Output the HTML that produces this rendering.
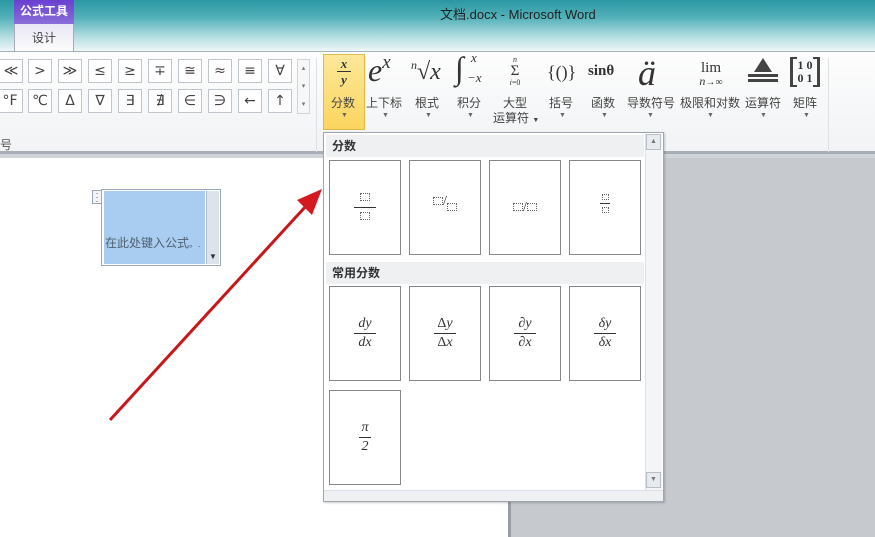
<!DOCTYPE html>
<html><head><meta charset="utf-8">
<style>
*{margin:0;padding:0;box-sizing:border-box}
body{width:875px;height:537px;overflow:hidden;position:relative;background:#fff;font-family:"Liberation Sans","Noto Sans CJK SC",sans-serif;color:#333}
.abs{position:absolute}
.title{left:0;top:0;width:875px;height:52px;background:linear-gradient(#2a97a3 0%,#55b2ba 35%,#b2dde0 70%,#f2f8f9 100%)}
.ribbon{left:0;top:51px;width:875px;height:103px;background:linear-gradient(#fdfdfd,#f1f3f5);border-top:1px solid #a9b3bd;border-bottom:3px solid #a8aeb6}
.sym{width:24px;height:24px;border:1px solid #bfc5cb;background:#fff;font-size:14px;text-align:center;line-height:22px;color:#444;font-family:"DejaVu Sans",sans-serif}
.lbl{font-size:12px;color:#444;position:absolute;white-space:nowrap}
.dd{font-size:7px;color:#666;position:absolute}
.cell{width:72px;height:95px;border:1px solid #888;background:#fff;position:absolute;font-family:"Liberation Serif",serif;font-style:italic;font-size:14px;text-align:center;color:#333}
.frac{position:absolute;left:0;width:100%;top:28px;line-height:18px}
.frac hr{width:22px;margin:0 auto;border:0;border-top:1px solid #333}
.box{display:inline-block;width:10px;height:8px;border:1px dotted #666}
</style></head><body>
<div class="abs title"></div>
<div class="abs" style="left:14px;top:0;width:60px;height:24px;background:linear-gradient(#6a3fd0,#8a6ed8);color:#fff;font-size:12px;font-weight:bold;text-align:center;line-height:22px">公式工具</div>
<div class="abs" style="left:14px;top:24px;width:60px;height:28px;background:linear-gradient(#e8e6f4,#fdfdfd);border-left:1px solid #aab;border-right:1px solid #aab;font-size:12px;text-align:center;line-height:28px;color:#444">设计</div>
<div class="abs" style="left:440px;top:4px;font-size:13px;color:#222">文档.docx - Microsoft Word</div>
<div class="abs ribbon"></div>
<div class="abs" style="left:0;top:154px;width:875px;height:4px;background:#d0d3d8"></div>
<div class="abs" style="left:0;top:59px">
<div class="abs sym" style="left:-1px">≪</div><div class="abs sym" style="left:28px">&gt;</div><div class="abs sym" style="left:58px">≫</div><div class="abs sym" style="left:88px">≤</div><div class="abs sym" style="left:118px">≥</div><div class="abs sym" style="left:148px">∓</div><div class="abs sym" style="left:178px">≅</div><div class="abs sym" style="left:208px">≈</div><div class="abs sym" style="left:238px">≡</div><div class="abs sym" style="left:268px">∀</div>
</div>
<div class="abs" style="left:0;top:89px">
<div class="abs sym" style="left:-3px;width:26px">°F</div><div class="abs sym" style="left:28px">℃</div><div class="abs sym" style="left:58px">Δ</div><div class="abs sym" style="left:88px">∇</div><div class="abs sym" style="left:118px">∃</div><div class="abs sym" style="left:148px">∄</div><div class="abs sym" style="left:178px">∈</div><div class="abs sym" style="left:208px">∋</div><div class="abs sym" style="left:238px">←</div><div class="abs sym" style="left:268px">↑</div>
</div>
<div class="abs" style="left:297px;top:59px;width:13px;height:55px;border:1px solid #d0d5da;background:#f6f7f8;font-size:7px;color:#777;text-align:center;line-height:18px">▴<br>▾<br>▾</div>
<div class="abs" style="left:0;top:136px;font-size:12px;color:#555">号</div>
<div class="abs" style="left:316px;top:58px;width:1px;height:94px;background:#dde1e5"></div>
<div class="abs" style="left:828px;top:58px;width:1px;height:94px;background:#dde1e5"></div>
<div class="abs" style="left:323px;top:54px;width:42px;height:76px;background:linear-gradient(#fde89a,#fbd55e);border:1px solid #e2b84a"></div>
<div class="abs" style="left:323px;top:54px;width:42px;text-align:center;font-family:'Liberation Serif',serif;font-style:italic;font-weight:bold;font-size:13px;line-height:13px;padding-top:3px">x<div style="width:14px;margin:1px auto;border-top:1px solid #333"></div>y</div>
<div class="lbl" style="left:331px;top:94px">分数</div><div class="dd" style="left:341px;top:112px">▼</div>
<div class="abs" style="left:368px;top:52px;font-family:'Liberation Serif',serif;font-style:italic;font-size:32px;color:#333">e<span style="font-size:19px;vertical-align:13px">x</span></div>
<div class="lbl" style="left:366px;top:94px">上下标</div><div class="dd" style="left:382px;top:112px">▼</div>
<div class="abs" style="left:411px;top:58px;font-family:'Liberation Serif',serif;font-style:italic;font-size:24px;color:#333"><span style="font-size:12px;vertical-align:10px">n</span>√x</div>
<div class="lbl" style="left:415px;top:94px">根式</div><div class="dd" style="left:425px;top:112px">▼</div>
<div class="abs" style="left:455px;top:50px;width:30px;height:40px;font-family:'Liberation Serif',serif;font-size:32px;color:#333;line-height:36px">∫<span style="font-size:13px;font-style:italic;position:absolute;left:16px;top:-10px">x</span><span style="font-size:13px;font-style:italic;position:absolute;left:12px;top:10px">−x</span></div>
<div class="lbl" style="left:457px;top:94px">积分</div><div class="dd" style="left:467px;top:112px">▼</div>
<div class="abs" style="left:505px;top:55px;width:20px;text-align:center;font-family:'Liberation Serif',serif;font-size:8px;line-height:9px;color:#333"><i>n</i><br><span style="font-size:15px;line-height:14px">Σ</span><br><i>i</i>=0</div>
<div class="lbl" style="left:503px;top:94px">大型</div><div class="lbl" style="left:493px;top:109px">运算符 <span style="font-size:7px">▼</span></div>
<div class="abs" style="left:547px;top:62px;font-family:'Liberation Serif',serif;font-size:18px;color:#333">{()}</div>
<div class="lbl" style="left:549px;top:94px">括号</div><div class="dd" style="left:559px;top:112px">▼</div>
<div class="abs" style="left:588px;top:63px;font-family:'Liberation Serif',serif;font-size:15px;font-weight:bold;color:#333">sinθ</div>
<div class="lbl" style="left:591px;top:94px">函数</div><div class="dd" style="left:601px;top:112px">▼</div>
<div class="abs" style="left:638px;top:52px;font-family:'Liberation Serif',serif;font-style:italic;font-size:36px;color:#333">ä</div>
<div class="lbl" style="left:627px;top:94px">导数符号</div><div class="dd" style="left:647px;top:112px">▼</div>
<div class="abs" style="left:694px;top:62px;width:34px;text-align:center;font-family:'Liberation Serif',serif;font-size:15px;line-height:13px;color:#333">lim<br><span style="font-size:12px;font-style:italic">n</span><span style="font-size:10px">→∞</span></div>
<div class="lbl" style="left:680px;top:94px">极限和对数</div><div class="dd" style="left:707px;top:112px">▼</div>
<div class="abs" style="left:748px;top:58px;width:30px;height:26px"><div style="width:0;height:0;margin:0 auto;border-left:9px solid transparent;border-right:9px solid transparent;border-bottom:14px solid #444"></div><div style="height:3px;background:#444;margin-top:2px"></div><div style="height:3px;background:#444;margin-top:2px"></div></div>
<div class="lbl" style="left:745px;top:94px">运算符</div><div class="dd" style="left:760px;top:112px">▼</div>
<div class="abs" style="left:790px;top:57px;width:30px;height:30px;border:3px solid #444;border-top-width:2px;border-bottom-width:2px;font-family:'Liberation Serif',serif;font-weight:bold;font-size:12px;line-height:13px;text-align:center;color:#333;padding-top:0px"><div style="position:absolute;left:4px;top:-2px;width:16px;height:30px;background:#f8f9fa"></div><div style="position:relative">1 0<br>0 1</div></div>
<div class="lbl" style="left:793px;top:94px">矩阵</div><div class="dd" style="left:803px;top:112px">▼</div>
<div class="abs" style="left:510px;top:158px;width:365px;height:379px;background:#c6cacf"></div>
<div class="abs" style="left:508px;top:158px;width:3px;height:379px;background:#9a9ea4"></div>
<div class="abs" style="left:101px;top:189px;width:120px;height:77px;border:1px solid #9aa8b8;background:#fff"></div>
<div class="abs" style="left:104px;top:191px;width:101px;height:73px;background:#a8cdf0"></div>
<div class="abs" style="left:206px;top:191px;width:13px;height:73px;background:#dde3ea;border-left:1px solid #b6c0cc;font-size:8px;color:#333;text-align:center;padding-top:62px;line-height:8px">▼</div>
<div class="abs" style="left:92px;top:190px;width:10px;height:14px;border:1px solid #9aa8b8;background:#f2f4f7;font-size:9px;line-height:4px;text-align:center;color:#555">·<br>·<br>·</div>
<div class="abs" style="left:105px;top:234px;font-size:12px;color:#506070">在此处键入公式<span style="font-size:9px">。.</span></div>
<svg class="abs" style="left:0;top:0" width="875" height="537"><line x1="110" y1="420" x2="306" y2="206" stroke="#c8161a" stroke-width="3"/><polygon points="322,189 297,200 312,215" fill="#d41a1e"/></svg>
<div class="abs" style="left:323px;top:132px;width:341px;height:370px;background:#fff;border:1px solid #9ea6b0;box-shadow:1px 1px 2px rgba(0,0,0,.2)"></div>
<div class="abs" style="left:326px;top:135px;width:318px;height:22px;background:#eef0f2;font-size:12px;font-weight:bold;line-height:22px;padding-left:6px;color:#333">分数</div>
<div class="abs" style="left:326px;top:262px;width:318px;height:22px;background:#eef0f2;font-size:12px;font-weight:bold;line-height:22px;padding-left:6px;color:#333">常用分数</div>
<div class="abs" style="left:645px;top:134px;width:17px;height:356px;background:#f4f5f6;border-left:1px solid #dde"></div>
<div class="abs" style="left:646px;top:134px;width:15px;height:16px;border:1px solid #b8bec6;background:#e8ebee;font-size:7px;text-align:center;line-height:14px;color:#777">▲</div>
<div class="abs" style="left:646px;top:472px;width:15px;height:16px;border:1px solid #b8bec6;background:#e8ebee;font-size:7px;text-align:center;line-height:14px;color:#777">▼</div>
<div class="abs" style="left:324px;top:490px;width:339px;height:11px;background:#eef0f2;border-top:1px solid #dde"></div>
<div class="cell" style="left:329px;top:160px"><div class="frac" style="top:28px"><span class="box"></span><hr><span class="box"></span></div></div>
<div class="cell" style="left:409px;top:160px"><div class="frac" style="top:32px;font-style:normal"><span class="box"></span>/<span class="box" style="vertical-align:-6px"></span></div></div>
<div class="cell" style="left:489px;top:160px"><div class="frac" style="top:38px;font-style:normal"><span class="box"></span>/<span class="box"></span></div></div>
<div class="cell" style="left:569px;top:160px"><div class="frac" style="top:30px;line-height:12px;font-size:9px"><span class="box" style="width:7px;height:6px"></span><hr style="width:10px"><span class="box" style="width:7px;height:6px"></span></div></div>
<div class="cell" style="left:329px;top:286px"><div class="frac">dy<hr>dx</div></div>
<div class="cell" style="left:409px;top:286px"><div class="frac"><span style="font-style:normal">Δ</span>y<hr><span style="font-style:normal">Δ</span>x</div></div>
<div class="cell" style="left:489px;top:286px"><div class="frac">∂y<hr>∂x</div></div>
<div class="cell" style="left:569px;top:286px"><div class="frac">δy<hr>δx</div></div>
<div class="cell" style="left:329px;top:390px"><div class="frac">π<hr style="width:12px">2</div></div>
</body></html>
